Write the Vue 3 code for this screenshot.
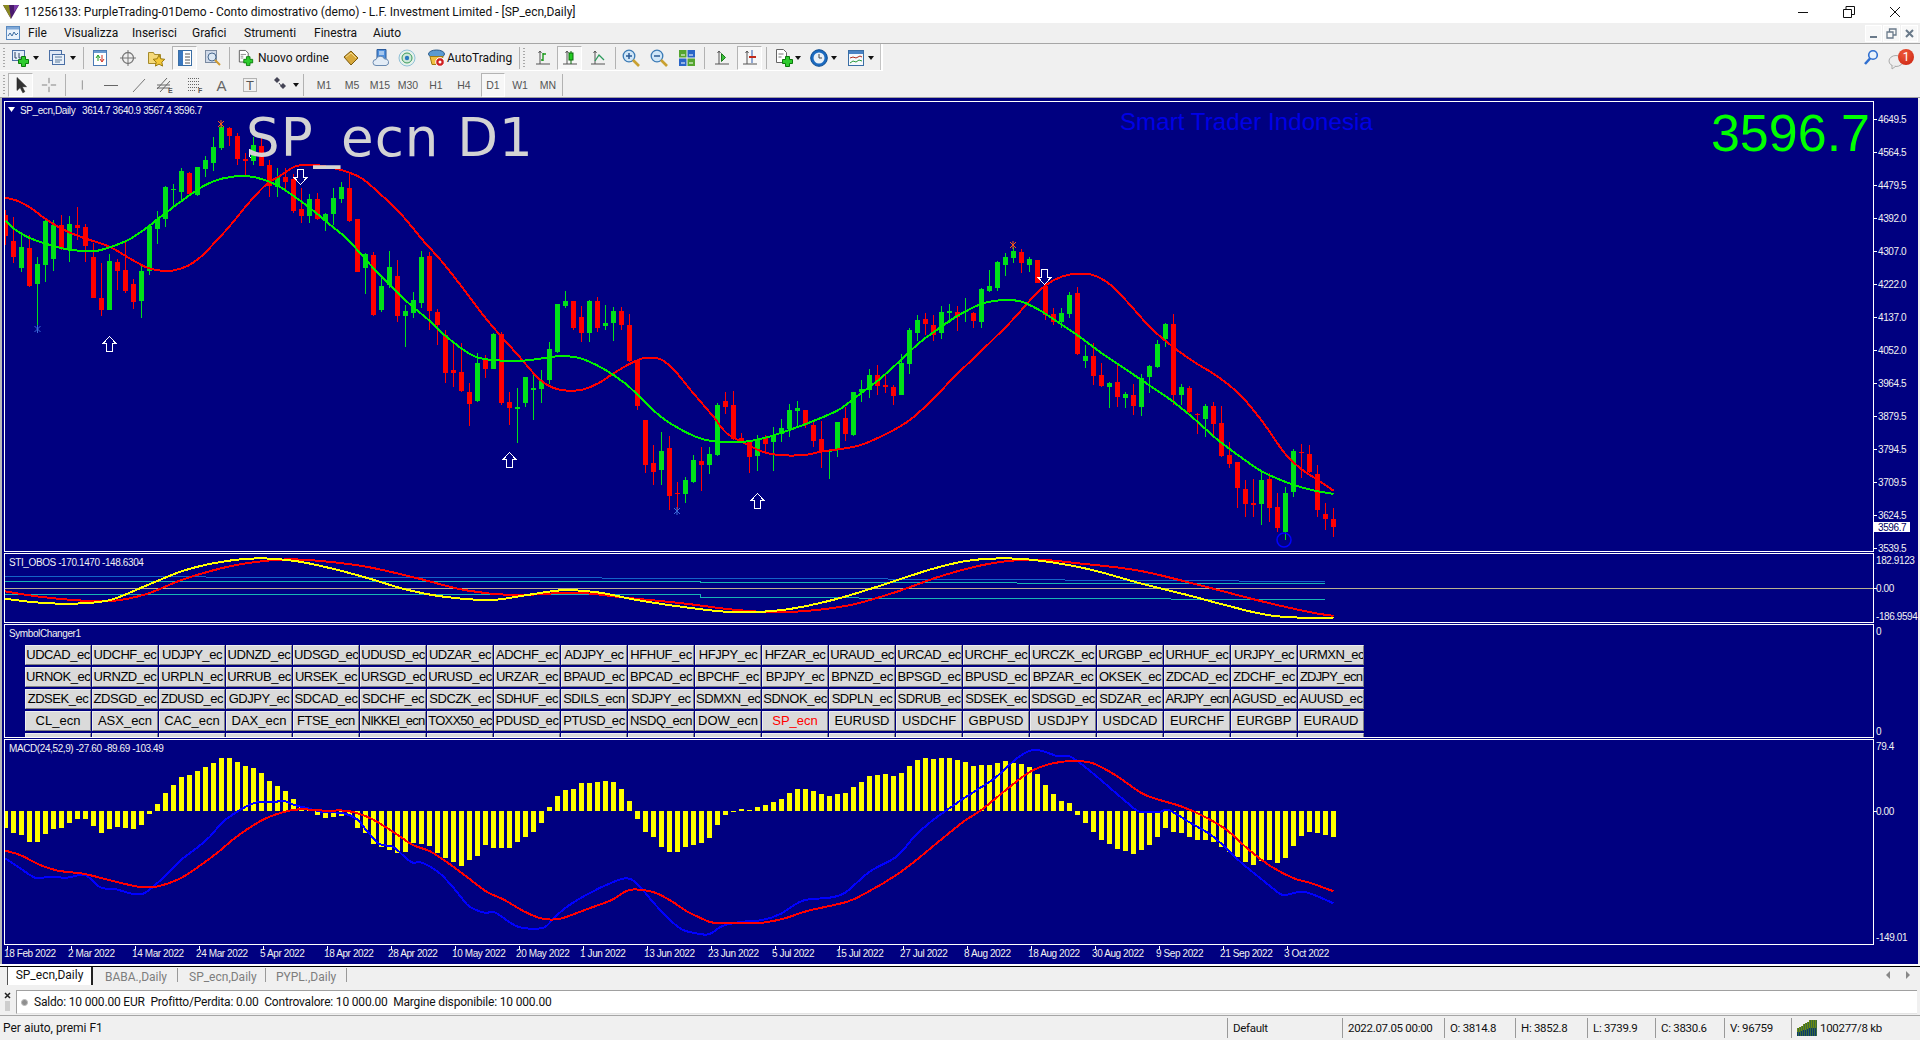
<script setup>
const k = 1920 / 1568

// catmull-rom smoothing into one svg path
function smooth(pts) {
  let d = `M${pts[0][0].toFixed(1)} ${pts[0][1].toFixed(1)}`
  for (let i = 0; i < pts.length - 1; i++) {
    const p0 = pts[Math.max(i - 1, 0)], p1 = pts[i], p2 = pts[i + 1], p3 = pts[Math.min(i + 2, pts.length - 1)]
    const c1 = [p1[0] + (p2[0] - p0[0]) / 6, p1[1] + (p2[1] - p0[1]) / 6]
    const c2 = [p2[0] - (p3[0] - p1[0]) / 6, p2[1] - (p3[1] - p1[1]) / 6]
    d += `C${c1[0].toFixed(1)} ${c1[1].toFixed(1)} ${c2[0].toFixed(1)} ${c2[1].toFixed(1)} ${p2[0].toFixed(1)} ${p2[1].toFixed(1)}`
  }
  return d
}
const fromZoom = (a, xo, yo, b = []) => [
  ...a.map(([x, y]) => [xo + x / 2.24, yo + y / 3]),
  ...b.map(([x, y]) => [xo + 700 + x / 2.24, yo + y / 3])
]
const thumb = a => a.map(([x, y]) => [x * k, y * k])

const candleSrc = 'r 330 345 408 435,r 350 423 472 490,g 395 440 504 517,r 405 443 558 560,g 470 492 552 685,g 358 362 495 545,g 360 375 477 512,r 345 375 447 450,g 348 372 450 487,r 322 375 384 420,r 372 382 438 485,r 430 471 594 595,r 490 594 630 647,g 462 483 630 630,r 478 486 513 570,r 425 510 573 578,r 536 552 606 627,g 495 513 603 653,g 375 378 513 525,g 332 357 387 432,g 258 261 357 380,g 252 267 270 325,g 205 213 276 300,r 215 219 282 285,g 200 202 285 288,g 168 180 207 230,g 110 141 189 213,g 75 81 144 150,r 82 84 108 138,r 100 108 177 195,r 160 177 183 228,g 110 135 183 195,r 105 138 198 198,r 180 195 258 290,g 205 231 261 290,r 205 231 246 270,r 222 237 333 340,r 265 327 348 370,g 283 297 348 370,r 280 297 357 360,g 340 342 363 392,g 265 294 342 375,g 245 261 297 310,r 222 264 363 365,r 358 358 516 517,g 460 462 504 582,r 455 465 645 647,g 530 558 630 635,g 453 501 555 565,r 480 528 648 665,g 615 633 648 740,g 575 600 639 655,g 453 471 609 625,r 455 468 633 690,r 628 636 675 735,r 690 705 819 850,r 725 810 819 860,r 730 816 873 875,r 850 876 912 977,g 760 789 903 905,r 765 780 807 835,g 700 702 807 808,r 697 702 909 915,r 875 906 924 975,g 865 921 927 1030,g 830 831 909 920,g 825 864 870 960,g 810 843 867 908,g 725 747 840 852,g 612 612 756 760,g 573 603 618 625,r 602 603 684 690,r 618 651 699 725,g 600 603 699 725,r 590 603 684 695,g 615 669 678 690,g 620 633 669 722,r 622 633 675 690,r 642 675 783 785,r 780 780 918 930,r 960 960 1095 1118,r 1035 1089 1116 1155,g 997 1053 1110 1155,r 1008 1044 1188 1230,r 1145 1178 1181 1235,g 1130 1140 1182 1210,g 1065 1080 1146 1150,r 1040 1083 1095 1172,g 1040 1062 1095 1122,g 908 915 1065 1068,r 875 903 921 942,r 873 915 1017 1020,r 1000 1014 1026 1026,r 1020 1020 1071 1118,g 1005 1020 1068 1112,r 1005 1014 1032 1055,g 982 1008 1026 1112,g 958 984 1002 1025,g 912 930 987 1010,g 903 924 933 980,r 930 930 975 985,r 960 975 1023 1040,r 963 1017 1056 1103,g 1050 1050 1056 1137,g 965 966 1050 1070,r 920 954 1002 1022,g 875 876 1005 1008,g 840 867 876 905,g 808 825 870 895,r 796 825 858 885,r 825 855 861 880,r 855 861 888 915,g 762 789 885 885,g 685 690 792 822,g 645 660 699 722,r 640 657 672 705,r 645 675 705 722,g 617 636 699 717,g 612 633 639 670,r 618 636 651 692,g 595 633 636 665,r 635 639 663 685,g 565 567 666 683,g 510 558 573 575,g 483 486 564 572,g 460 471 495 527,g 440 453 474 490,r 448 456 489 518,g 470 477 495 515,r 480 480 549 550,r 545 558 645 660,r 625 642 666 675,g 625 639 666 685,g 575 585 642 655,r 560 579 762 765,g 735 768 783 803,r 728 768 828 855,r 790 825 858 860,g 845 849 861 923,r 790 846 891 920,g 875 882 894 925,r 853 885 918 945,g 823 834 921 947,g 795 798 831 880,g 720 732 801 805,g 670 672 717 740,r 643 672 885 915,g 853 861 885 915,r 858 864 936 940,r 940 943 946 1002,g 912 918 957 1012,r 905 918 972 1010,r 918 969 1068 1070,r 1025 1065 1092 1105,r 1085 1086 1164 1225,r 1140 1167 1212 1250,r 1137 1209 1214 1250,g 1115 1140 1212 1275,r 1120 1137 1224 1265,r 1180 1221 1284 1295,g 1160 1179 1296 1320,g 1048 1053 1176 1190,r 1033 1056 1060 1135,r 1035 1062 1116 1118,r 1095 1122 1230 1250,r 1210 1242 1257 1290,r 1225 1257 1281 1312'
const candles = candleSrc.split(',').map((s, i) => {
  const [c, wt, bt, bb, wb] = s.split(' ')
  const Y = v => Math.round(100 + v / 3)
  const top = Y(wt), bodyTop = Y(bt), bodyBot = Math.max(Y(bb), Y(bt) + 1), bot = Y(wb)
  return { i, x: 5 + 8 * i, color: c === 'r' ? '#ff0000' : '#00e01a', top, bh: bot - top, bodyTop, bodyH: bodyBot - bodyTop }
})

const redMA = smooth(fromZoom(
  [[12,293],[40,303],[70,325],[100,355],[130,380],[160,400],[190,415],[245,440],[290,475],[325,500],[350,510],[385,512],[420,498],[450,470],[490,415],[520,370],[550,320],[580,275],[600,250],[630,225],[660,200],[690,194],[720,197],[770,212],[810,235],[850,280],[900,345],[950,425],[990,485],[1040,570],[1085,650],[1120,705],[1160,765],[1210,840],[1250,868],[1300,870],[1340,850],[1380,815],[1425,782],[1450,773],[1480,778],[1510,810],[1550,875]],
  0, 100,
  [[0,903],[30,950],[60,1000],[100,1030],[140,1055],[175,1065],[235,1065],[270,1055],[310,1048],[360,1035],[420,1000],[470,960],[520,900],[570,830],[640,740],[700,660],[740,600],[775,555],[810,530],[845,521],[880,525],[920,555],[960,610],[1000,670],[1040,720],[1100,780],[1160,830],[1210,885],[1260,965],[1310,1060],[1350,1110],[1390,1145],[1419,1172]]
))
const greenMA = smooth(fromZoom(
  [[12,362],[30,385],[60,410],[100,430],[150,448],[190,453],[215,453],[250,440],[290,418],[330,382],[370,340],[420,290],[460,255],[500,235],[545,228],[580,235],[620,255],[660,290],[700,330],[740,375],[780,420],[830,495],[880,565],[920,615],[960,660],[1000,710],[1050,760],[1090,778],[1170,782],[1230,772],[1260,768],[1300,775],[1350,805],[1400,850],[1440,900],[1480,950],[1520,985]],
  0, 100,
  [[0,1015],[40,1025],[100,1025],[150,1012],[200,990],[250,965],[310,930],[350,890],[400,840],[450,780],[490,730],[530,690],[580,645],[630,612],[680,600],[720,605],[760,630],[800,665],[850,710],[900,760],[950,805],[1000,850],[1060,905],[1110,960],[1160,1020],[1210,1070],[1260,1115],[1320,1150],[1370,1170],[1419,1182]]
))

const upArrows = [[109, 336], [509, 452], [757, 493]].map(([x, y]) => `M${x + .5} ${y + .5}l6.5 7h-3.5v8h-6v-8h-3.5z`)
const downArrows = [[300, 169], [1044, 269]].map(([x, y]) => `M${x + .5} ${y + 15.5}l6.5 -7h-3.5v-8h-6v8h-3.5z`)
const star = (x, y) => `M${x - 3} ${y - 3}l6 6M${x + 3} ${y - 3}l-6 6M${x} ${y - 4}v8`

const stoYellow = smooth(thumb([[4,489],[30,492],[60,493],[90,490],[120,478],[150,466],[180,459],[210,456],[240,458],[270,464],[300,472],[330,481],[360,487],[400,490],[430,486],[460,482],[490,484],[520,490],[560,496],[600,500],[640,498],[680,490],[720,478],[760,465],[790,458],[820,456],[850,458],[890,465],[930,476],[970,486],[1000,494],[1040,503],[1089,505]]))
const stoRed = smooth(thumb([[4,483],[30,487],[60,490],[90,491],[120,485],[150,473],[190,462],[230,457],[260,458],[300,463],[340,472],[380,482],[420,486],[470,484],[510,488],[560,493],[600,498],[640,500],[690,495],[730,484],[770,470],[810,460],[845,457],[880,460],[930,466],[980,478],[1030,491],[1070,500],[1089,503]]))

const macdEnds = [293,310,315,336,336,312,297,294,280,268,268,288,309,297,292,294,297,285,252,222,189,165,141,135,123,111,99,84,84,96,108,114,129,153,168,183,207,228,234,255,264,262,258,255,294,309,342,351,360,369,366,340,342,348,369,384,396,408,390,378,345,355,355,355,336,321,306,279,231,198,180,177,159,159,156,153,156,177,213,267,306,321,351,366,366,351,345,339,324,285,255,246,237,240,231,225,216,207,189,177,177,183,192,198,192,189,171,156,138,135,132,138,129,108,90,84,87,84,84,90,96,108,105,105,99,93,99,102,111,132,165,192,213,219,255,279,306,330,342,357,363,372,360,345,321,294,306,309,321,330,330,336,351,366,381,396,405,393,390,399,384,348,318,306,309,315,321]
const macdBars = macdEnds.map((e, i) => {
  const y = Math.round(730 + e / 3)
  return { i, x: 3 + 8 * i, y: Math.min(y, 811), h: Math.max(Math.abs(y - 811), 1) }
})
const macdBlue = smooth(fromZoom(
  [[12,385],[40,410],[80,444],[110,440],[150,443],[190,435],[225,472],[260,478],[295,491],[320,491],[345,468],[380,425],[410,385],[440,355],[470,320],[500,275],[540,238],[575,217],[615,216],[635,212],[660,225],[690,235],[720,245],[770,250],[800,268],[820,300],[850,342],[880,350],[910,385],[925,398],[945,398],[985,430],[1020,480],[1050,528],[1085,548],[1110,548],[1160,590],[1215,594],[1240,565],[1270,530],[1320,490],[1370,458],[1405,445],[1430,465],[1465,520],[1505,575],[1530,600]],
  0, 730,
  [[0,612],[22,612],[50,588],[90,576],[140,570],[180,552],[230,512],[290,503],[325,488],[380,425],[440,380],[480,320],[520,272],[580,215],[620,180],[660,145],[710,85],[740,62],[765,62],[800,78],[830,80],[880,130],[950,210],[985,245],[1030,245],[1050,240],[1100,280],[1150,320],[1210,395],[1260,450],[1300,492],[1315,494],[1355,486],[1419,520]]
))
const macdRed = smooth(fromZoom(
  [[12,362],[45,375],[90,405],[130,422],[190,432],[250,452],[310,470],[350,470],[400,448],[450,405],[490,365],[530,320],[585,272],[630,248],[670,238],[730,242],[780,243],[830,265],[880,305],[925,345],[965,365],[1010,405],[1050,445],[1090,485],[1130,510],[1175,545],[1215,566],[1255,566],[1320,535],[1370,510],[1410,480],[1460,485],[1500,510],[1540,545]],
  0, 730,
  [[0,563],[30,578],[90,578],[140,578],[190,565],[240,543],[330,515],[380,483],[440,435],[480,395],[530,340],[590,275],[630,240],[690,175],[740,125],[790,100],[840,93],[880,100],[930,135],[990,190],[1030,210],[1080,230],[1130,260],[1180,300],[1230,360],[1280,410],[1330,445],[1370,460],[1419,484]]
))

const mainAxis = ['4649.5','4564.5','4479.5','4392.0','4307.0','4222.0','4137.0','4052.0','3964.5','3879.5','3794.5','3709.5','3624.5'].map((t, i) => ({ t, y: 119 + 33 * i }))
mainAxis.push({ t: '3539.5', y: 548 })

const dates = ['18 Feb 2022','2 Mar 2022','14 Mar 2022','24 Mar 2022','5 Apr 2022','18 Apr 2022','28 Apr 2022','10 May 2022','20 May 2022','1 Jun 2022','13 Jun 2022','23 Jun 2022','5 Jul 2022','15 Jul 2022','27 Jul 2022','8 Aug 2022','18 Aug 2022','30 Aug 2022','9 Sep 2022','21 Sep 2022','3 Oct 2022'].map((t, i) => ({ t, x: 5 + 64 * i }))

// the labels as far as the narrow buttons of the panel show them
const symbolText = [
  'UDCAD_ec UDCHF_ec UDJPY_ec UDNZD_ec UDSGD_ec UDUSD_ec UDZAR_ec ADCHF_ec ADJPY_ec HFHUF_ec HFJPY_ec HFZAR_ec URAUD_ec URCAD_ec URCHF_ec URCZK_ec URGBP_ec URHUF_ec URJPY_ec URMXN_ec',
  'URNOK_ec URNZD_ec URPLN_ec URRUB_ec URSEK_ec URSGD_ec URUSD_ec URZAR_ec BPAUD_ec BPCAD_ec BPCHF_ec BPJPY_ec BPNZD_ec BPSGD_ec BPUSD_ec BPZAR_ec OKSEK_ec ZDCAD_ec ZDCHF_ec ZDJPY_ecn',
  'ZDSEK_ec ZDSGD_ec ZDUSD_ec GDJPY_ec SDCAD_ec SDCHF_ec SDCZK_ec SDHUF_ec SDILS_ecn SDJPY_ec SDMXN_ec SDNOK_ec SDPLN_ec SDRUB_ec SDSEK_ec SDSGD_ec SDZAR_ec ARJPY_ecn AGUSD_ec AUUSD_ec',
  'CL_ecn ASX_ecn CAC_ecn DAX_ecn FTSE_ecn NIKKEI_ecn TOXX50_ec PDUSD_ec PTUSD_ec NSDQ_ecn DOW_ecn SP_ecn EURUSD USDCHF GBPUSD USDJPY USDCAD EURCHF EURGBP EURAUD'
]
const veryTight = ['ZDJPY_ecn', 'ARJPY_ecn', 'NIKKEI_ecn', 'TOXX50_ec']
const symbols = []
symbolText.forEach(r => r.split(' ').forEach(s => symbols.push({
  s,
  tight: s.endsWith('_ec') || s.length >= 8,
  vtight: veryTight.includes(s)
})))
for (let i = 0; i < 20; i++) symbols.push({ s: '' })

const svg = (inner) => `<svg width="18" height="18" viewBox="0 0 18 18" style="display:block">${inner}</svg>`
const plus = (x, y) => `<path d="M${x + 3} ${y}h4v3h3v4h-3v3h-4v-3h-3v-4h3z" fill="#2ecc2e" stroke="#0a7a0a"/>`
const axes = `<path d="M6 2v13M2 15h14M4.500 4L6 2l1.500 2" stroke="#555" fill="none"/>`
const icons = {
  newchart: svg(`<rect x="1.500" y="1.500" width="12" height="10" fill="#e3edf9" stroke="#4a6fa5"/><path d="M4 3v6h2M8 4v5h3" stroke="#346" fill="none"/>${plus(7.5, 7.5)}`),
  profile: svg(`<rect x="1.500" y="1.500" width="12" height="10" fill="#dfe8f5" stroke="#4a6fa5"/><rect x="4.500" y="5.500" width="12" height="10" fill="#e9f0f9" stroke="#4a6fa5"/><path d="M7 8h7M7 11h7M7 13h5" stroke="#5a7a9a"/>`),
  market: svg(`<rect x="2.500" y="1.500" width="13" height="15" fill="#fff" stroke="#4a7ab5"/><rect x="3" y="2" width="12" height="2" fill="#6a9ad0"/><path d="M7 12V7M5 9l2-3 2 3" stroke="#1a9a1a" fill="none"/><path d="M11 6v6M9 10l2 3 2-3" stroke="#d03020" fill="none"/>`),
  cross: svg(`<circle cx="9" cy="9" r="5.500" stroke="#777" fill="none" stroke-width="1.300"/><path d="M9 1v16M1 9h16" stroke="#777"/>`),
  folder: svg(`<path d="M1.500 3.500h5l1 2h6v9h-12z" fill="#f5d97a" stroke="#a58a2a"/><path d="M12 6l1.800 3.800 4 .5-3 2.800.8 4-3.600-2-3.600 2 .8-4-3-2.800 4-.5z" fill="#f4c838" stroke="#9a7a10"/>`),
  nav: svg(`<rect x="2.500" y="1.500" width="13" height="15" fill="#fff" stroke="#3a6ea5"/><rect x="3" y="2" width="4" height="14" fill="#3a78c0"/><path d="M9 5h5M9 8h5M9 11h5M9 14h5" stroke="#555"/>`),
  tester: svg(`<rect x="2.500" y="1.500" width="11" height="12" fill="#cfd9e8" stroke="#7a8aa0"/><circle cx="9" cy="8" r="4" fill="#dbe7f3" stroke="#4a6a90"/><path d="M12 11l5 5" stroke="#d09a30" stroke-width="2"/>`),
  order: svg(`<path d="M1.500 .5h7l3 3v10h-10z" fill="#fff" stroke="#555"/><path d="M3 5h6M3 7h3M3 9h3" stroke="#888"/>${plus(6.5, 7.5)}`),
  book: svg(`<path d="M2 8L9 2l7 7-7 7z" fill="#d7a83c" stroke="#7a5a10"/><path d="M4 8l5-4 5 5" stroke="#f4dc90" fill="none"/>`),
  cloud: svg(`<path d="M5 .5h9v10H5z" fill="#4f8fdc" stroke="#2a5a9a"/><path d="M7 3h5M7 5h5" stroke="#fff"/><path d="M4 16.500a3 3 0 0 1 0-6 4.500 4.500 0 0 1 8.500-.5 3.200 3.200 0 0 1 1.500 6.500z" fill="#e3ecf6" stroke="#6a8ab0"/>`),
  signal: svg(`<circle cx="9" cy="9" r="8" fill="#e6f2ea" stroke="#8fc0d8"/><circle cx="9" cy="9" r="5" fill="#cfe8d8" stroke="#3a9a5a"/><circle cx="9" cy="9" r="2.200" fill="#2a7ac0"/>`),
  auto: svg(`<ellipse cx="9.500" cy="5" rx="8" ry="4" fill="#5a9ad0" stroke="#2a5a8a"/><path d="M3 7.500h13l-2 8h-9z" fill="#f0c040" stroke="#a07a10"/><circle cx="13" cy="13" r="4.300" fill="#d02020" stroke="#fff"/><circle cx="13" cy="13" r="1.500" fill="#fff"/>`),
  bars: svg(`${axes}<path d="M9 4v8M9 5h3M9 11H7" stroke="#1a9a1a" stroke-width="1.400" fill="none"/>`),
  candle: svg(`${axes}<path d="M10 2v13" stroke="#0a6a0a"/><rect x="8" y="4" width="4" height="7" fill="#22cc22" stroke="#0a6a0a"/>`),
  line: svg(`${axes}<path d="M6 12l4-6 5 5" stroke="#2a9a5a" fill="none" stroke-width="1.300"/>`),
  zoomin: svg(`<circle cx="7" cy="7" r="5.800" fill="#cfe6f8" stroke="#3a7ab5" stroke-width="1.300"/><path d="M4 7h6M7 4v6" stroke="#2a5a95" stroke-width="1.500"/><path d="M11 11l6 6" stroke="#c9a030" stroke-width="2.600"/>`),
  zoomout: svg(`<circle cx="7" cy="7" r="5.800" fill="#cfe6f8" stroke="#3a7ab5" stroke-width="1.300"/><path d="M4 7h6" stroke="#2a5a95" stroke-width="1.500"/><path d="M11 11l6 6" stroke="#c9a030" stroke-width="2.600"/>`),
  tile: svg(`<rect x="1" y="1" width="7.500" height="7.500" fill="#55a530"/><rect x="9.500" y="1" width="7.500" height="7.500" fill="#2a66c8"/><rect x="1" y="9.500" width="7.500" height="7.500" fill="#2a66c8"/><rect x="9.500" y="9.500" width="7.500" height="7.500" fill="#55a530"/><path d="M3 6h4M11 6h4M3 14h4M11 14h4" stroke="#fff"/>`),
  shift: svg(`${axes}<path d="M8.500 4.500l4 4-4 4z" fill="#3cc03c" stroke="#1a7a1a"/>`),
  scroll: svg(`${axes}<path d="M11 1v13" stroke="#2a5ab0"/><path d="M8 8h7" stroke="#c02a1a" stroke-width="2"/>`),
  tmpl: svg(`<path d="M1.500 .5h7l3 3v10h-10z" fill="#fff" stroke="#666"/><path d="M3.500 5h5M3.500 8h3" stroke="#777"/>${plus(7.5, 7.5)}`),
  clock: svg(`<circle cx="9" cy="9" r="8.300" fill="#1a6ac0" stroke="#0a4a90"/><circle cx="9" cy="9" r="5.500" fill="#e8f0f8"/><path d="M9 5v4h3" stroke="#444" fill="none"/>`),
  chart2: svg(`<rect x="1.500" y="1.500" width="15" height="15" fill="#f5f8fc" stroke="#3a6ea5"/><rect x="2" y="2" width="14" height="3" fill="#4a82c4"/><path d="M3 9l3-1 3 1 4-2 2 1" stroke="#b02818" fill="none"/><path d="M3 14l3-2 3 1 3-2 3 1" stroke="#2a9a3a" fill="none"/>`),
  cursor: svg(`<path d="M5 1.500v13l3.200-3 2.600 5.200 2-1-2.600-5h4.300z" fill="#333" stroke="#222" stroke-width=".6"/>`),
  cross2: svg(`<path d="M9 1v6M9 11v6M1 9h6M11 9h6" stroke="#777"/>`),
  vline: svg(`<path d="M9.500 2v14" stroke="#666"/>`),
  hline: svg(`<path d="M2 9.500h14" stroke="#666"/>`),
  trend: svg(`<path d="M3 16L15 3" stroke="#777"/>`),
  channel: svg(`<path d="M1 13L11 2M4 16L14 5M1 9h13M1 12h13" stroke="#666" fill="none"/><text x="12" y="17" font-size="7" font-family="Liberation Sans" font-weight="700" fill="#555">E</text>`),
  fib: svg(`<path d="M2 2.500h12M2 5.500h12M2 8.500h12M2 11.500h12M2 14.500h8" stroke="#666" stroke-dasharray="1 1"/><text x="12" y="17" font-size="7" font-family="Liberation Sans" font-weight="700" fill="#555">F</text>`),
  textA: svg(`<text x="3.500" y="15" font-size="15" font-family="Liberation Sans" fill="#666">A</text>`),
  textT: svg(`<rect x="2.500" y="2.500" width="13" height="13" fill="none" stroke="#777" stroke-dasharray="1 1"/><text x="5" y="14" font-size="13" font-family="Liberation Sans" fill="#555">T</text>`),
  marks: svg(`<path d="M6 1l3 3-3 3-3-3z" fill="#445"/><path d="M12 7l3 3-3 3-3-3z" fill="#445"/><path d="M8 7l3 4" stroke="#445"/>`)
}

const row1 = [
  { g: 1, w: 8 }, { i: 'newchart', w: 24 }, { a: 1, w: 8 }, { w: 4 }, { i: 'profile', w: 26 }, { a: 1, w: 6 }, { w: 7 }, { s: 1 },
  { w: 4 }, { i: 'market', w: 24 }, { w: 4 }, { i: 'cross', w: 24 }, { w: 4 }, { i: 'folder', w: 24 }, { w: 4 }, { i: 'nav', w: 25, p: 1 }, { w: 3 }, { i: 'tester', w: 24 }, { w: 5 }, { s: 1 },
  { w: 8 }, { i: 'order', w: 16 }, { t: 'Nuovo ordine', w: 80, pad: 4 }, { w: 6 }, { i: 'book', w: 22 }, { w: 8 }, { i: 'cloud', w: 22 }, { w: 4 }, { i: 'signal', w: 22 }, { w: 6 }, { i: 'auto', w: 23 }, { t: 'AutoTrading', w: 72, pad: 0 }, { s: 1 },
  { g: 1, w: 8 }, { w: 4 }, { i: 'bars', w: 22 }, { w: 3 }, { i: 'candle', w: 25, p: 1 }, { w: 5 }, { i: 'line', w: 22 }, { w: 6 }, { s: 1 }, { w: 4 }, { i: 'zoomin', w: 22 }, { w: 6 }, { i: 'zoomout', w: 22 }, { w: 6 }, { i: 'tile', w: 22 }, { w: 6 }, { s: 1 },
  { w: 6 }, { i: 'shift', w: 22 }, { w: 4 }, { i: 'scroll', w: 25, p: 1 }, { w: 4 }, { s: 1 }, { w: 7 }, { i: 'tmpl', w: 20 }, { a: 1, w: 8 }, { w: 7 }, { i: 'clock', w: 20 }, { a: 1, w: 10 }, { w: 7 }, { i: 'chart2', w: 20 }, { a: 1, w: 10 }, { w: 5 }
]
const row2 = [
  { g: 1, w: 8 }, { i: 'cursor', w: 25, p: 1 }, { w: 8 }, { i: 'cross2', w: 16 }, { w: 8 }, { s: 1 }, { w: 10 }, { i: 'vline', w: 12 }, { w: 11 }, { i: 'hline', w: 24 }, { w: 3 }, { i: 'trend', w: 26 }, { i: 'channel', w: 26 }, { i: 'fib', w: 34 }, { i: 'textA', w: 20 }, { i: 'textT', w: 36 }, { i: 'marks', w: 24 }, { a: 1, w: 8 }, { w: 3 }, { s: 1 }, { w: 6 },
  { tf: 'M1', w: 28 }, { tf: 'M5', w: 28 }, { tf: 'M15', w: 28 }, { tf: 'M30', w: 28 }, { tf: 'H1', w: 28 }, { tf: 'H4', w: 28 }, { w: 3 }, { tf: 'D1', w: 24, p: 1 }, { w: 1 }, { tf: 'W1', w: 28 }, { tf: 'MN', w: 28 }, { s: 1 }
]
const menus = [
  { t: 'File', w: 36 }, { t: 'Visualizza', w: 68 }, { t: 'Inserisci', w: 60 }, { t: 'Grafici', w: 52 },
  { t: 'Strumenti', w: 70 }, { t: 'Finestra', w: 59 }, { t: 'Aiuto', w: 40 }
]
const statusCells = [
  { t: 'Default', w: 115 }, { t: '2022.07.05 00:00', w: 102 }, { t: 'O: 3814.8', w: 71 }, { t: 'H: 3852.8', w: 72 },
  { t: 'L: 3739.9', w: 68 }, { t: 'C: 3830.6', w: 69 }, { t: 'V: 96759', w: 67 }
]
const memBars = [6, 7, 8, 9, 10, 11, 12, 12, 12, 12]
</script>

<template>
  <div class="app">
    <header class="title">
      <svg class="logo" width="16" height="16" viewBox="0 0 16 16"><path d="M0 1h16L8 15z" fill="#4a1a6e"/><path d="M0 1h6l2 14z" fill="#8a8a20"/><path d="M11 1h5l-5 7z" fill="#7a3aa8"/></svg>
      <span class="title-text">11256133: PurpleTrading-01Demo - Conto dimostrativo (demo) - L.F. Investment Limited - [SP_ecn,Daily]</span>
      <div class="win">
        <svg width="12" height="12" viewBox="0 0 12 12"><path d="M1 6.500h10" stroke="#111"/></svg>
        <svg width="12" height="12" viewBox="0 0 12 12"><path d="M.5 3.500h8v8h-8zM3 3.500v-3h8.500v8H8.500" fill="none" stroke="#111"/></svg>
        <svg width="12" height="12" viewBox="0 0 12 12"><path d="M1 1l10 10M11 1L1 11" stroke="#111"/></svg>
      </div>
    </header>

    <nav class="menu">
      <svg class="menu-ico" width="16" height="16" viewBox="0 0 16 16"><rect x="1.500" y="1.500" width="13" height="13" fill="#eaf2fb" stroke="#5a8ac0"/><rect x="2" y="2" width="12" height="2.500" fill="#7fa8d8"/><path d="M3 11l2-3 2 3 2-4 2 3 2-2" stroke="#3a6aa0" fill="none"/></svg>
      <span v-for="m in menus" :key="m.t" class="menu-item" :style="{ width: m.w + 'px' }">{{ m.t }}</span>
      <div class="mdi">
        <span class="mdi-btn"><svg width="11" height="11" viewBox="0 0 11 11"><path d="M2 9h7" stroke="#6a7a8a" stroke-width="2"/></svg></span>
        <span class="mdi-btn"><svg width="11" height="11" viewBox="0 0 11 11"><path d="M1 4h6v6H1zM3.500 4V1h6.500v6H7" fill="none" stroke="#6a7a8a" stroke-width="1.300"/></svg></span>
        <span class="mdi-btn"><svg width="11" height="11" viewBox="0 0 11 11"><path d="M2 2l7 7M9 2l-7 7" stroke="#6a7a8a" stroke-width="2"/></svg></span>
      </div>
    </nav>

    <div class="toolbar tb1">
      <div class="tbar tbar1">
        <template v-for="(it, n) in row1" :key="n">
          <span v-if="it.s" class="sep"></span>
          <span v-else-if="it.g" class="grip" :style="{ width: it.w + 'px' }"></span>
          <span v-else-if="it.a" class="caret" :style="{ width: it.w + 'px' }"></span>
          <span v-else-if="it.t" class="tlabel" :style="{ width: it.w + 'px', paddingLeft: it.pad + 'px' }">{{ it.t }}</span>
          <span v-else-if="it.i" class="tool" :class="{ pressed: it.p }" :style="{ width: it.w + 'px' }" v-html="icons[it.i]"></span>
          <span v-else :style="{ width: it.w + 'px' }"></span>
        </template>
      </div>
      <div class="tb-right">
        <svg width="16" height="18" viewBox="0 0 16 18"><circle cx="10" cy="6" r="4.300" fill="#eaf3fc" stroke="#2f6fd0" stroke-width="1.600"/><path d="M7 9.500L2 15" stroke="#2f6fd0" stroke-width="2.600"/></svg>
        <span class="chat">
          <svg width="18" height="16" viewBox="0 0 18 16"><ellipse cx="8" cy="7" rx="7" ry="5.500" fill="#eee" stroke="#aaa"/><path d="M4 11v4l4-3" fill="#eee" stroke="#aaa"/></svg>
          <b class="badge">1</b>
        </span>
      </div>
    </div>

    <div class="toolbar tb2">
      <div class="tbar tbar2">
        <template v-for="(it, n) in row2" :key="n">
          <span v-if="it.s" class="sep"></span>
          <span v-else-if="it.g" class="grip" :style="{ width: it.w + 'px' }"></span>
          <span v-else-if="it.a" class="caret" :style="{ width: it.w + 'px' }"></span>
          <span v-else-if="it.tf" class="tf" :class="{ pressed: it.p }" :style="{ width: it.w + 'px' }">{{ it.tf }}</span>
          <span v-else-if="it.i" class="tool" :class="{ pressed: it.p }" :style="{ width: it.w + 'px' }" v-html="icons[it.i]"></span>
          <span v-else :style="{ width: it.w + 'px' }"></span>
        </template>
      </div>
    </div>

    <main class="chart">
      <!-- price pane -->
      <section class="pane main-pane">
        <div class="plot">
          <svg class="canvas" width="1868" height="449" viewBox="5 102 1868 449">
            <g shape-rendering="crispEdges">
              <g v-for="c in candles" :key="c.i" :fill="c.color">
                <rect :x="c.x" :y="c.top" width="1" :height="c.bh"/>
                <rect :x="c.x - 2" :y="c.bodyTop" width="5" :height="c.bodyH"/>
              </g>
              <path d="M249.500 149v7l1 2" fill="none" stroke="#fff"/>
              <path :d="redMA" fill="none" stroke="#ff0000" stroke-width="2"/>
              <path :d="greenMA" fill="none" stroke="#00f000" stroke-width="2"/>
              <path v-for="(d, n) in upArrows" :key="'u' + n" :d="d" fill="#000080" stroke="#fff"/>
              <path v-for="(d, n) in downArrows" :key="'d' + n" :d="d" fill="#000080" stroke="#fff"/>
            </g>
            <path :d="star(221, 124)" stroke="#ff5a10" fill="none"/>
            <path :d="star(1013, 245)" stroke="#ff5a10" fill="none"/>
            <path :d="star(37.5, 329)" stroke="#3a6ad8" fill="none"/>
            <path :d="star(677, 511)" stroke="#3a6ad8" fill="none"/>
            <circle cx="1284" cy="540" r="7" fill="none" stroke="#0000ff" stroke-width="1.500"/>
            <path d="M8 107h7l-3.500 5z" fill="#fff"/>
            <text x="20" y="114" class="lab">SP_ecn,Daily</text>
            <text x="82" y="114" class="lab">3614.7 3640.9 3567.4 3596.7</text>
            <text x="246" y="156" class="big">SP_ecn D1</text>
            <text x="1120" y="130" class="brand">Smart Trader Indonesia</text>
            <text x="1870" y="151" class="quote" text-anchor="end">3596.7</text>
          </svg>
        </div>
        <div class="axis">
          <svg width="46" height="451" viewBox="1874 101 46 451">
            <g v-for="a in mainAxis" :key="a.t">
              <path :d="`M1874 ${a.y + .5}h3`" stroke="#fff"/>
              <text x="1878" :y="a.y + 4" class="ax">{{ a.t }}</text>
            </g>
            <rect x="1874" y="522" width="36" height="10" fill="#fff"/>
            <text x="1878" y="531" class="ax ax-dark">3596.7</text>
          </svg>
        </div>
      </section>

      <!-- oscillator pane -->
      <section class="pane sto-pane">
        <div class="plot">
          <svg class="canvas" width="1868" height="68" viewBox="5 554 1868 68">
            <g shape-rendering="crispEdges">
              <path d="M5 588.500H1873" stroke="#b8b090"/>
              <path d="M5 581.500L700 581.500 700 582.500 1325 583.500" stroke="#18b4b4" fill="none"/>
              <path d="M5 594.500L700 594.500 700 597.500 1325 599.500" stroke="#18b4b4" fill="none"/>
              <path d="M5 576.500L400 577.500 800 578.500 1325 581.500" stroke="#1464c8" fill="none"/>
              <path :d="stoRed" fill="none" stroke="#ff0000" stroke-width="2"/>
              <path :d="stoYellow" fill="none" stroke="#ffff00" stroke-width="2"/>
            </g>
            <text x="9" y="566" class="lab">STI_OBOS -170.1470 -148.6304</text>
          </svg>
        </div>
        <div class="axis">
          <svg width="46" height="70" viewBox="1874 553 46 70">
            <text x="1876" y="564" class="ax">182.9123</text>
            <path d="M1874 588.500h3" stroke="#fff"/>
            <text x="1876" y="592" class="ax">0.00</text>
            <text x="1876" y="620" class="ax">-186.9594</text>
          </svg>
        </div>
      </section>

      <!-- symbol changer pane -->
      <section class="pane sym-pane">
        <div class="plot sym-plot">
          <div class="sym-title">SymbolChanger1</div>
          <div class="sym-grid">
            <div v-for="(b, n) in symbols" :key="n" class="sym" :class="{ active: b.s === 'SP_ecn', tight: b.tight, vtight: b.vtight }">{{ b.s }}</div>
          </div>
        </div>
        <div class="axis">
          <svg width="46" height="114" viewBox="1874 624 46 114">
            <text x="1876" y="635" class="ax">0</text>
            <text x="1876" y="735" class="ax">0</text>
          </svg>
        </div>
      </section>

      <!-- MACD pane -->
      <section class="pane macd-pane">
        <div class="plot">
          <svg class="canvas" width="1868" height="204" viewBox="5 740 1868 204">
            <g shape-rendering="crispEdges">
              <rect v-for="b in macdBars" :key="b.i" :x="b.x" :y="b.y" width="5" :height="b.h" fill="#ffff00"/>
              <path :d="macdBlue" fill="none" stroke="#0000ff" stroke-width="2"/>
              <path :d="macdRed" fill="none" stroke="#ff0000" stroke-width="2"/>
            </g>
            <text x="9" y="752" class="lab">MACD(24,52,9) -27.60 -89.69 -103.49</text>
          </svg>
        </div>
        <div class="axis">
          <svg width="46" height="206" viewBox="1874 739 46 206">
            <text x="1876" y="750" class="ax">79.4</text>
            <path d="M1874 811.500h3" stroke="#fff"/>
            <text x="1876" y="815" class="ax">0.00</text>
            <text x="1876" y="941" class="ax">-149.01</text>
          </svg>
        </div>
      </section>

      <div class="dates">
        <svg width="1920" height="20" viewBox="0 945 1920 20">
          <g v-for="d in dates" :key="d.t">
            <path :d="`M${d.x + .5} 945v4`" stroke="#fff"/>
            <text :x="d.x - 3" y="956" class="ax">{{ d.t }}</text>
          </g>
        </svg>
      </div>
    </main>

    <div class="tabs">
      <span class="tab tab-active">SP_ecn,Daily</span>
      <span class="tab tab-a">BABA.,Daily</span>
      <span class="tab tab-b">SP_ecn,Daily</span>
      <span class="tab tab-c">PYPL.,Daily</span>
      <span class="tab-arrows">
        <svg width="5" height="8" viewBox="0 0 5 8"><path d="M4 0v8L0 4z" fill="#888"/></svg>
        <svg width="5" height="8" viewBox="0 0 5 8"><path d="M1 0v8l4-4z" fill="#888"/></svg>
      </span>
    </div>

    <div class="trade">
      <div class="trade-handle">
        <svg width="9" height="22" viewBox="0 0 9 22"><path d="M2 2l5 5M7 2l-5 5" stroke="#222" stroke-width="1.500"/><path d="M2 11h5M2 13h5M2 15h5M2 17h5M2 19h5" stroke="#aaa"/></svg>
      </div>
      <div class="trade-box">
        <i class="dot"></i>
        <span class="trade-text">Saldo: 10 000.00 EUR&nbsp; Profitto/Perdita: 0.00&nbsp; Controvalore: 10 000.00&nbsp; Margine disponibile: 10 000.00</span>
      </div>
    </div>

    <footer class="status">
      <span class="status-help">Per aiuto, premi F1</span>
      <span v-for="c in statusCells" :key="c.t" class="cell" :style="{ width: c.w + 'px' }">{{ c.t }}</span>
      <span class="cell cell-mem">
        <span class="mem">
          <i v-for="(h, n) in memBars" :key="n" :style="{ height: h * 1.300 + 'px' }"></i>
        </span>
        100277/8 kb
      </span>
    </footer>
  </div>
</template>

<style scoped>
.app {
  width: 1920px;
  height: 1040px;
  overflow: hidden;
  display: flex;
  flex-direction: column;
  background: #f0f0f0;
  font-family: "Roboto", "Liberation Sans", sans-serif;
  font-size: 12px;
  color: #111;
}
.title {
  height: 23px;
  flex: none;
  background: #fff;
  display: flex;
  align-items: center;
  padding-left: 3px;
}
.logo { margin-right: 5px; }
.title-text { font-size: 12px; color: #111; }
.win {
  margin-left: auto;
  display: flex;
  gap: 34px;
  padding-right: 19px;
  align-items: center;
}
.menu {
  height: 20px;
  flex: none;
  display: flex;
  align-items: center;
  background: #f0f0f0;
}
.menu-ico { margin: 0 7px 0 5px; }
.menu-item { flex: none; font-size: 12px; }
.mdi { margin-left: auto; display: flex; gap: 1px; padding-right: 2px; }
.mdi-btn {
  width: 17px;
  height: 17px;
  background: #f8f8f8;
  border: 1px solid #fff;
  box-sizing: border-box;
  display: flex;
  align-items: center;
  justify-content: center;
}
.toolbar { flex: none; background: #f0f0f0; display: flex; box-sizing: border-box; }
.tb1 { height: 28px; border-top: 1px solid #a6a6a6; }
.tb2 { height: 27px; border-bottom: 1px solid #a0a0a0; }
.tbar { display: flex; align-items: center; height: 100%; box-sizing: border-box; padding-top: 2px; }
.tbar1 { border-right: 2px solid #fff; border-bottom: 1px solid #fff; box-shadow: inset -1px 0 0 #c4c4c4; }
.tool, .tf {
  height: 24px;
  flex: none;
  display: flex;
  align-items: center;
  justify-content: center;
  box-sizing: border-box;
}
.tf { font-family: "Liberation Sans", sans-serif; font-size: 10.500px; color: #555; }
.pressed {
  background: #f7f7f7;
  border: 1px solid;
  border-color: #b4b4b4 #fff #fff #b4b4b4;
}
.sep { width: 1px; height: 22px; background: #b2b2b2; flex: none; }
.grip {
  height: 20px;
  flex: none;
  background: repeating-linear-gradient(to bottom, #a8a8a8 0 1px, transparent 1px 3px) 3px 0 / 2px 100% no-repeat;
}
.caret { height: 24px; flex: none; position: relative; }
.caret::after {
  content: "";
  position: absolute;
  left: 50%;
  top: 10px;
  margin-left: -3px;
  border: 3px solid transparent;
  border-top: 4px solid #111;
  border-bottom: 0;
}
.tlabel { font-size: 12px; line-height: 24px; white-space: nowrap; box-sizing: border-box; flex: none; color: #111; }
.tb-right {
  margin-left: auto;
  display: flex;
  align-items: center;
  gap: 9px;
  padding-right: 6px;
}
.chat { position: relative; display: block; width: 26px; height: 24px; padding-top: 8px; box-sizing: border-box; }
.badge {
  position: absolute;
  right: 0;
  top: 3px;
  width: 16px;
  height: 16px;
  border-radius: 50%;
  background: radial-gradient(circle at 40% 30%, #ee5a3a, #c9200f);
  color: #fff;
  font-weight: 400;
  font-size: 12px;
  line-height: 16px;
  text-align: center;
}
.chart {
  height: 867px;
  flex: none;
  background: #000080;
  box-sizing: border-box;
  padding-top: 3px;
  display: flex;
  flex-direction: column;
  gap: 1px;
  border-left: 2px solid #b8b8b8;
  border-right: 2px solid #f0f0f0;
}
.pane { display: flex; flex: none; padding-left: 2px; }
.main-pane { height: 451px; }
.sto-pane { height: 70px; }
.sym-pane { height: 114px; }
.macd-pane { height: 206px; }
.plot {
  width: 1870px;
  flex: none;
  box-sizing: border-box;
  border: 1px solid #fff;
  overflow: hidden;
  position: relative;
}
.canvas { display: block; }
.axis { flex: none; width: 46px; }
.axis svg { display: block; overflow: visible; }
.lab, .ax {
  font-family: "Liberation Sans", sans-serif;
  font-size: 10px;
  letter-spacing: -0.4px;
  fill: #f2f2f2;
}
.ax-dark { fill: #000060; }
.big { font-family: "DejaVu Sans", sans-serif; font-size: 53px; fill: #d3d3d3; letter-spacing: 1px; }
.brand { font-family: "Liberation Sans", sans-serif; font-size: 24px; letter-spacing: 0.1px; fill: #0000e6; }
.quote { font-family: "Liberation Sans", sans-serif; font-size: 52px; fill: #00ff00; }
.sym-plot { padding: 3px 0 0 20px; }
.sym-title {
  height: 17px;
  margin-left: -16px;
  font-family: "Liberation Sans", sans-serif;
  font-size: 10px;
  letter-spacing: -0.4px;
  line-height: 12px;
  color: #f2f2f2;
}
.sym-grid {
  display: grid;
  grid-template-columns: repeat(20, 66px);
  grid-auto-rows: 20px;
  column-gap: 1px;
  row-gap: 2px;
}
.sym {
  background: #dadada;
  box-sizing: border-box;
  border-top: 1px solid #eee;
  border-left: 1px solid #eee;
  border-right: 1px solid #808080;
  border-bottom: 1px solid #808080;
  text-align: center;
  line-height: 18px;
  font-family: "Liberation Sans", sans-serif;
  font-size: 13px;
  color: #000;
  white-space: nowrap;
  overflow: hidden;
}
.sym.tight { letter-spacing: -0.45px; }
.sym.vtight { letter-spacing: -0.8px; }
.sym.active { color: #ff0000; }
.dates { height: 20px; flex: none; }
.dates svg { display: block; }
.tabs {
  height: 24px;
  flex: none;
  box-sizing: border-box;
  margin-top: -1px;
  border-top: 2px solid #fff;
  display: flex;
  align-items: stretch;
  position: relative;
}
.tabs::before {
  content: "";
  position: absolute;
  left: 0;
  right: 0;
  top: 0;
  height: 1px;
  background: #000;
}
.tab { font-size: 12px; line-height: 20px; padding-top: 1px; color: #7d7d7d; box-sizing: border-box; flex: none; white-space: nowrap; }
.tab-active {
  width: 86px;
  margin-left: 7px;
  background: #fff;
  color: #111;
  text-align: center;
  border-left: 1px solid #555;
  border-right: 2px solid #222;
  height: 19px;
  line-height: 17px;
}
.tab-a { width: 85px; padding-left: 12px; background: linear-gradient(#999, #999) right 2px / 1px 14px no-repeat; }
.tab-b { width: 88px; padding-left: 11px; background: linear-gradient(#999, #999) right 2px / 1px 14px no-repeat; }
.tab-c { width: 81px; padding-left: 10px; background: linear-gradient(#999, #999) right 2px / 1px 14px no-repeat; }
.tab-arrows { margin-left: auto; display: flex; gap: 14px; align-items: center; padding-right: 10px; height: 18px; }
.trade {
  height: 28px;
  flex: none;
  box-sizing: border-box;
  border-bottom: 1px solid #a6a6a6;
  display: flex;
  padding-top: 2px;
}
.trade-handle { width: 16px; flex: none; padding: 1px 0 0 3px; box-sizing: border-box; }
.trade-box {
  width: 1901px;
  height: 24px;
  flex: none;
  box-sizing: border-box;
  background: #fff;
  border-top: 1px solid #a0a0a0;
  border-left: 1px solid #a0a0a0;
  border-bottom: 1px solid #e4e4e4;
  display: flex;
  align-items: center;
  padding-left: 4px;
}
.dot {
  width: 7px;
  height: 7px;
  border-radius: 50%;
  background: #8f8f8f;
  border: 1px solid #bbb;
  box-sizing: border-box;
  margin-right: 6px;
}
.trade-text { font-size: 12px; letter-spacing: -0.18px; white-space: nowrap; color: #111; }
.status { flex: 1; display: flex; align-items: center; }
.status-help { width: 1227px; flex: none; padding-left: 3px; box-sizing: border-box; font-size: 12px; }
.cell {
  flex: none;
  box-sizing: border-box;
  border-left: 1px solid #999;
  padding-left: 5px;
  height: 20px;
  line-height: 20px;
  font-size: 11.500px;
  letter-spacing: -0.3px;
  white-space: nowrap;
}
.cell-mem { display: flex; align-items: center; gap: 4px; }
.mem { display: flex; align-items: flex-end; gap: 1px; height: 16px; }
.mem i { width: 1px; display: block; background: linear-gradient(to top, #0a3a6a 50%, #6a8a10 50%); height: 16px; box-shadow: 1px 0 0 #3a6a3a; }
</style>

<style>
html, body { margin: 0; padding: 0; background: #f0f0f0; overflow: hidden; }
</style>
